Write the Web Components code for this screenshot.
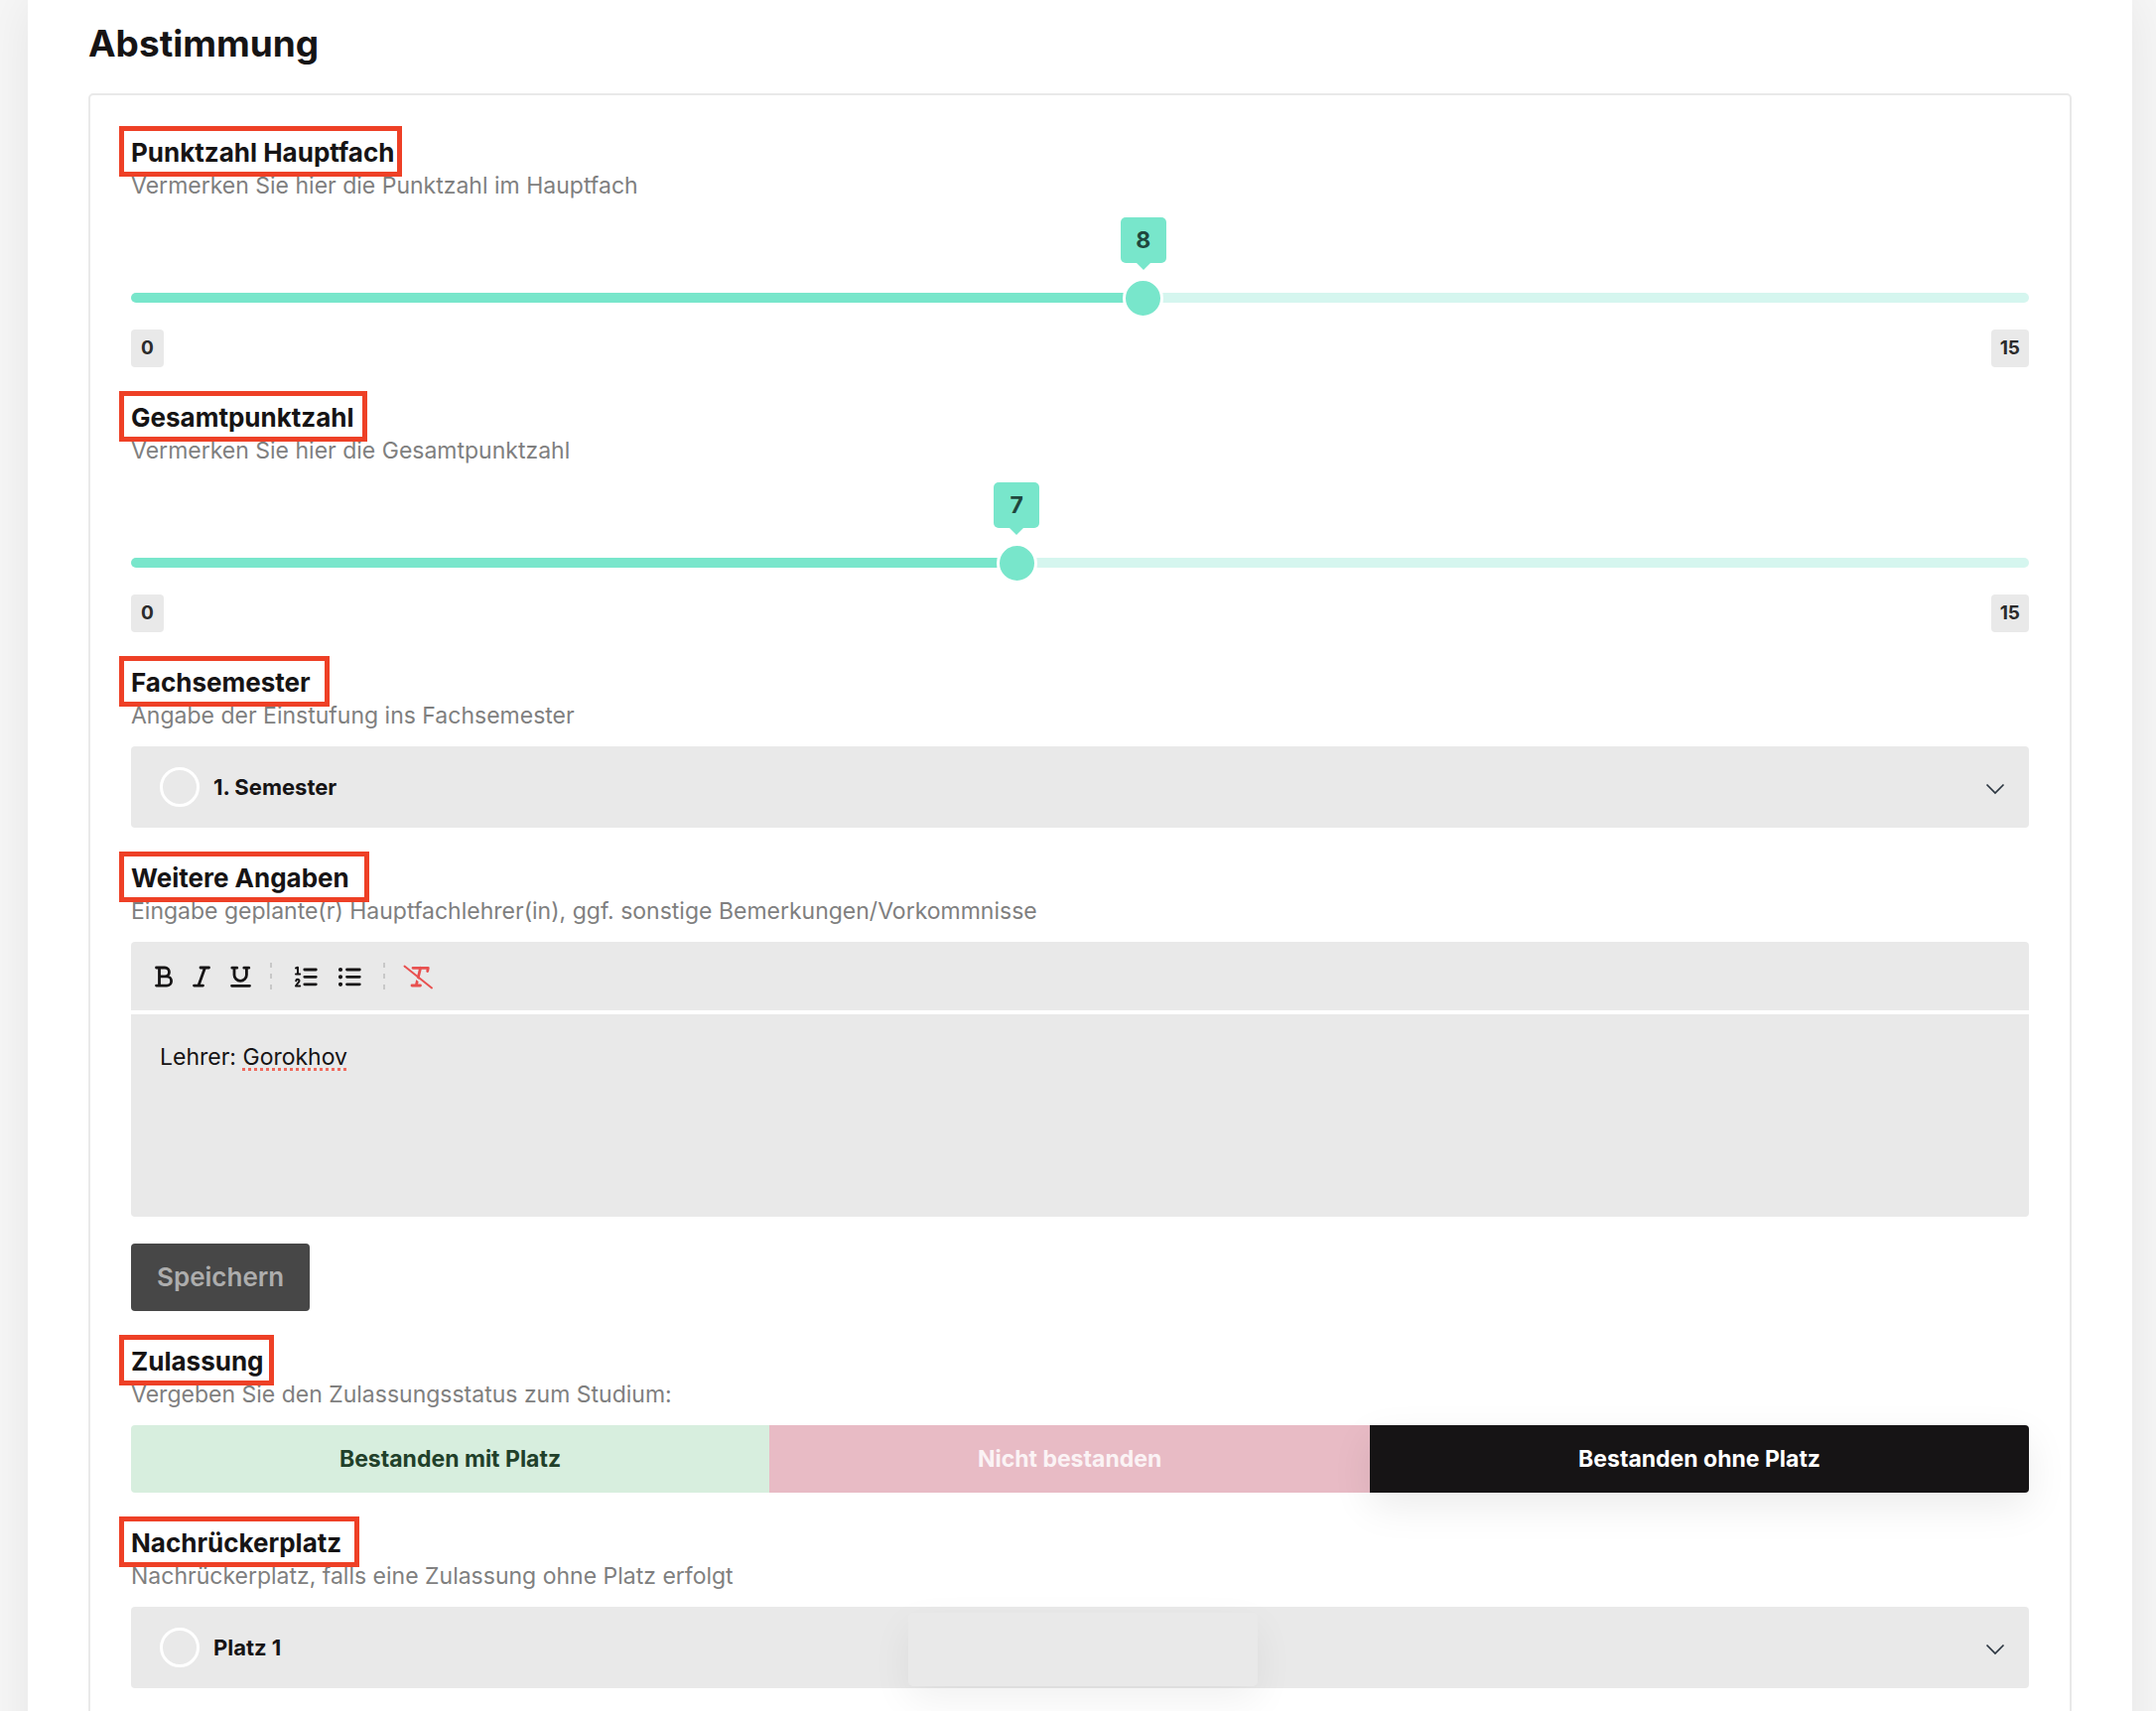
<!DOCTYPE html>
<html lang="de">
<head>
<meta charset="utf-8">
<title>Abstimmung</title>
<style>
    body {
        margin: 0;
        background: #f6f6f6;
        color: #161415;
        font-family: Inter, "Liberation Sans", sans-serif;
    }
</style>
</head>
<body>

<vote-page>
    <h1 slot="heading">Abstimmung</h1>
    <score-slider label="Punktzahl Hauptfach" hint="Vermerken Sie hier die Punktzahl im Hauptfach" max="15" value="8" mark="285"></score-slider>
    <score-slider label="Gesamtpunktzahl" hint="Vermerken Sie hier die Gesamtpunktzahl" max="15" value="7" mark="250"></score-slider>
    <choice-select label="Fachsemester" hint="Angabe der Einstufung ins Fachsemester" options="1. Semester" mark="212"></choice-select>
    <note-editor label="Weitere Angaben" hint="Eingabe geplante(r) Hauptfachlehrer(in), ggf. sonstige Bemerkungen/Vorkommnisse" mark="252">Lehrer: <span class="misspelt">Gorokhov</span></note-editor>
    <status-switch label="Zulassung" hint="Vergeben Sie den Zulassungsstatus zum Studium:" mark="156">
        <button type="button" class="pass" aria-pressed="false">Bestanden mit Platz</button>
        <button type="button" class="fail" aria-pressed="false">Nicht bestanden</button>
        <button type="button" class="wait" aria-pressed="true">Bestanden ohne Platz</button>
    </status-switch>
    <choice-select label="Nachrückerplatz" hint="Nachrückerplatz, falls eine Zulassung ohne Platz erfolgt" options="Platz 1" mark="242"></choice-select>
</vote-page>
<toast-area></toast-area>

<script>
class VotePage extends HTMLElement {
    constructor() {
        super();
        this.attachShadow({mode: 'open'});
        this.shadowRoot.innerHTML = `
            <style>
                :host {
                    display: block;
                    box-sizing: border-box;
                    height: 100vh;
                    padding: 0 24px 0 28px;
                    overflow-y: auto;
                    scrollbar-width: none;
                }
                main {
                    padding: 19px 61px 61px;
                    background: white;
                    box-shadow: 0 0 50px rgba(0,0,0,0.07);
                }
                ::slotted([slot="heading"]) {
                    margin: 0 0 25px;
                    font-size: 37px;
                    line-height: 50px;
                }
                .panel {
                    display: flex;
                    flex-direction: column;
                    gap: 34px;
                    padding: 41px;
                    border: 2px solid #e9e9e9;
                    border-radius: 5px;
                }
            </style>
            <main>
                <slot name="heading"></slot>
                <section class="panel"><slot></slot></section>
            </main>
        `;
    }
}

// shared label, hint and marker frame for every field
class FormField extends HTMLElement {
    constructor() {
        super();
        this.attachShadow({mode: 'open'});
        const mark = this.getAttribute('mark');
        this.shadowRoot.innerHTML = `
            <style>
                :host {
                    display: flex;
                    flex-direction: column;
                }
                .head {
                    position: relative;
                    margin-bottom: 15px;
                }
                .mark {
                    position: absolute;
                    top: -10px;
                    left: -12px;
                    box-sizing: border-box;
                    height: 51px;
                    border: 5px solid #ee4026;
                    pointer-events: none;
                }
                .label {
                    display: block;
                    font-size: 26px;
                    font-weight: 700;
                    line-height: 34px;
                }
                .hint {
                    margin: 0;
                    font-size: 23px;
                    line-height: 32px;
                    color: #7f7f7f;
                }
                ${this.styles()}
            </style>
            <div class="head">
                <label class="label" id="label" for="control">${this.getAttribute('label')}</label>
                <p class="hint" id="hint">${this.getAttribute('hint')}</p>
                ${mark ? `<div class="mark" style="width: ${mark}px"></div>` : ''}
            </div>
            ${this.control()}
        `;
    }

    styles () {
        return '';
    }

    control () {
        return '<slot></slot>';
    }
}

class ScoreSlider extends FormField {
    constructor() {
        super();
        this.input = this.shadowRoot.querySelector('input');
        this.input.addEventListener('input', this._update);
        this._update();
    }

    _update = () => {
        const percent = this.input.value / this.input.max * 100;
        this.shadowRoot.querySelector('.rail').style.setProperty('--percent', percent + '%');
        this.shadowRoot.querySelector('output').textContent = this.input.value;
    }

    styles () {
        return `
            .rail {
                position: relative;
                height: 10px;
                margin: 77px 0 27px;
                border-radius: 5px;
                background: linear-gradient(#78e6cb, #78e6cb) 0 0 / var(--percent) 100% no-repeat #d5f6ef;
            }
            /* wider than the rail by one thumb, so the ends line up */
            input {
                position: absolute;
                top: -15px;
                left: -20px;
                width: calc(100% + 40px);
                height: 40px;
                margin: 0;
                appearance: none;
                background: none;
            }
            input::-webkit-slider-thumb {
                appearance: none;
                box-sizing: border-box;
                width: 41px;
                height: 41px;
                border: 3px solid white;
                border-radius: 50%;
                background: #78e6cb;
            }
            output {
                position: absolute;
                bottom: 40px;
                left: var(--percent);
                transform: translateX(-50%);
                min-width: 46px;
                border-radius: 5px;
                background: #78e6cb;
                color: #20463d;
                font-size: 23px;
                font-weight: 700;
                line-height: 46px;
                text-align: center;
            }
            output::after {
                content: "";
                position: absolute;
                top: 100%;
                left: 50%;
                transform: translateX(-50%);
                border: 7px solid transparent;
                border-top-color: #78e6cb;
                border-bottom: 0;
            }
            .limits {
                display: flex;
                justify-content: space-between;
            }
            .limits span {
                box-sizing: border-box;
                min-width: 33px;
                padding: 0 9px;
                border-radius: 4px;
                background: #e9e9e9;
                color: #2b2b2b;
                font-size: 19px;
                font-weight: 700;
                line-height: 38px;
                text-align: center;
            }
        `;
    }

    control () {
        const max = this.getAttribute('max');
        return `
            <div class="rail">
                <input id="control" type="range" min="0" max="${max}" value="${this.getAttribute('value')}" aria-describedby="hint">
                <output for="control"></output>
            </div>
            <div class="limits"><span>0</span><span>${max}</span></div>
        `;
    }
}

class ChoiceSelect extends FormField {
    styles () {
        return `
            .box {
                position: relative;
            }
            select {
                display: block;
                width: 100%;
                height: 82px;
                padding: 0 60px 0 83px;
                border: 0;
                border-radius: 4px;
                appearance: none;
                background: #e9e9e9;
                color: inherit;
                font: 700 22px Inter, "Liberation Sans", sans-serif;
            }
            .dot {
                position: absolute;
                top: 21px;
                left: 29px;
                box-sizing: border-box;
                width: 40px;
                height: 40px;
                border: 3px solid white;
                border-radius: 50%;
                pointer-events: none;
            }
            svg {
                position: absolute;
                top: 32px;
                right: 24px;
                pointer-events: none;
            }
        `;
    }

    control () {
        const options = this.getAttribute('options').split('|');
        return `
            <div class="box">
                <select id="control" aria-describedby="hint">
                    ${options.map(option => `<option>${option}</option>`).join('')}
                </select>
                <span class="dot"></span>
                <svg width="20" height="20" fill="none" stroke="#2b3540" stroke-width="1.7"><path d="M1.5 6.5L10 15l8.5-8.5"/></svg>
            </div>
        `;
    }
}

class NoteEditor extends FormField {
    styles () {
        return `
            .toolbar {
                display: flex;
                align-items: center;
                height: 69px;
                margin-bottom: 4px;
                padding: 0 14px;
                box-sizing: border-box;
                border-radius: 4px 4px 0 0;
                background: #e9e9e9;
            }
            .toolbar button {
                display: flex;
                justify-content: center;
                width: 38px;
                padding: 0;
                border: 0;
                background: none;
                color: inherit;
            }
            .toolbar button.wide {
                width: 44px;
            }
            .toolbar button.clear {
                color: #e8504f;
            }
            .toolbar svg {
                width: 32px;
                height: 32px;
                fill: none;
                stroke: currentColor;
                stroke-width: 2.8;
                stroke-linecap: round;
                stroke-linejoin: round;
            }
            .rule {
                width: 2px;
                height: 28px;
                margin: 0 12px;
                background: repeating-linear-gradient(#c8c8c8 0 5px, transparent 5px 11px);
            }
            .text {
                box-sizing: border-box;
                min-height: 204px;
                padding: 27px 29px;
                border-radius: 0 0 4px 4px;
                background: #e9e9e9;
                font-size: 23px;
                line-height: 32px;
            }
            ::slotted(.misspelt) {
                text-decoration: underline dotted #f0695c 3px;
                text-decoration-skip-ink: none;
                text-underline-offset: 3px;
            }
            .save {
                align-self: flex-start;
                margin-top: 27px;
                padding: 0 26px;
                border: 0;
                border-radius: 4px;
                background: #474747;
                color: #adadad;
                font: 600 26px/68px Inter, "Liberation Sans", sans-serif;
            }
        `;
    }

    control () {
        return `
            <div class="toolbar" role="toolbar">
                <button type="button" aria-label="Fett"><svg viewBox="0 0 32 32"><path d="M8.5 7H17a4.4 4.4 0 0 1 0 8.9H11.5M17 15.9h2a4.6 4.6 0 0 1 0 9.2H8.5M11.5 7v18"/></svg></button>
                <button type="button" aria-label="Kursiv"><svg viewBox="0 0 32 32"><path d="M15 7h8.5M8.5 25.1h9M19.5 7L13 25"/></svg></button>
                <button type="button" aria-label="Unterstrichen"><svg viewBox="0 0 32 32"><path d="M8.8 7.2h5M20.8 7.2h5M11 7.2v7a6.2 6.2 0 0 0 12.4 0v-7M8.5 25.3h18"/></svg></button>
                <span class="rule"></span>
                <button type="button" class="wide" aria-label="Nummerierte Liste"><svg viewBox="0 0 32 32"><path d="M14.8 9h11.5M14.8 16.3h11.5M14.8 23.8h11.5"/><path stroke-width="2" d="M6 7.5l2-.7v6.5M6 13.5h4.2M6.2 20.3c.2-2 3.4-1.9 3.3.1-.1 1.6-2.3 2.5-3.5 5.1h4.2"/></svg></button>
                <button type="button" class="wide" aria-label="Liste"><svg viewBox="0 0 32 32"><path d="M13.5 9h12.8M13.5 16.3h12.8M13.5 23.8h12.8"/><path stroke-width="4.2" d="M7 9h.01M7 16.3h.01M7 23.8h.01"/></svg></button>
                <span class="rule"></span>
                <button type="button" class="wide clear" aria-label="Formatierung entfernen"><svg viewBox="0 0 32 32"><path d="M10 7.3h15.3l-.6 3.2M17.6 7.3L13.3 24.8M9 25h8.5"/><path stroke="#e9e9e9" stroke-width="2" d="M0 7.5l28 22"/><path stroke-width="2" d="M1.5 5.5l27.500 22"/></svg></button>
            </div>
            <div class="text" id="control" role="textbox" aria-multiline="true" aria-labelledby="label" contenteditable="true" spellcheck="false"><slot></slot></div>
            <button type="button" class="save">Speichern</button>
        `;
    }
}

class StatusSwitch extends FormField {
    constructor() {
        super();
        this.addEventListener('click', this._select);
    }

    _select = (event) => {
        const picked = event.target.closest('button');
        if (!picked) return;
        this.querySelectorAll('button').forEach(button => {
            button.setAttribute('aria-pressed', button === picked);
        });
    }

    styles () {
        return `
            .group {
                display: flex;
            }
            ::slotted(button) {
                flex: 1 1 auto;
                padding: 0;
                border: 0;
                font: 700 23px/68px Inter, "Liberation Sans", sans-serif;
            }
            ::slotted(.pass) {
                border-radius: 4px 0 0 4px;
                background: #d7eede;
                color: #21402a;
            }
            ::slotted(.fail) {
                background: #e8bbc5;
                color: #fbf3f5;
            }
            ::slotted(.wait) {
                border-radius: 0 4px 4px 0;
                background: #161415;
                color: white;
            }
            ::slotted([aria-pressed="true"]) {
                box-shadow: 0 14px 40px rgba(0,0,0,0.08);
            }
        `;
    }

    control () {
        return '<div class="group" id="control" role="group" aria-labelledby="label"><slot></slot></div>';
    }
}

// empty notification holder, only its shadow shows
class ToastArea extends HTMLElement {
    constructor() {
        super();
        this.attachShadow({mode: 'open'});
        this.shadowRoot.innerHTML = `
            <style>
                :host {
                    position: fixed;
                    bottom: 25px;
                    left: 50%;
                    transform: translateX(-50%);
                    width: 352px;
                    height: 74px;
                    margin-left: 5px;
                    border-radius: 5px;
                    box-shadow: 0 14px 40px rgba(0,0,0,0.06);
                    pointer-events: none;
                }
            </style>
            <slot></slot>
        `;
    }
}

customElements.define('vote-page', VotePage);
customElements.define('score-slider', ScoreSlider);
customElements.define('choice-select', ChoiceSelect);
customElements.define('note-editor', NoteEditor);
customElements.define('status-switch', StatusSwitch);
customElements.define('toast-area', ToastArea);
</script>
</body>
</html>
